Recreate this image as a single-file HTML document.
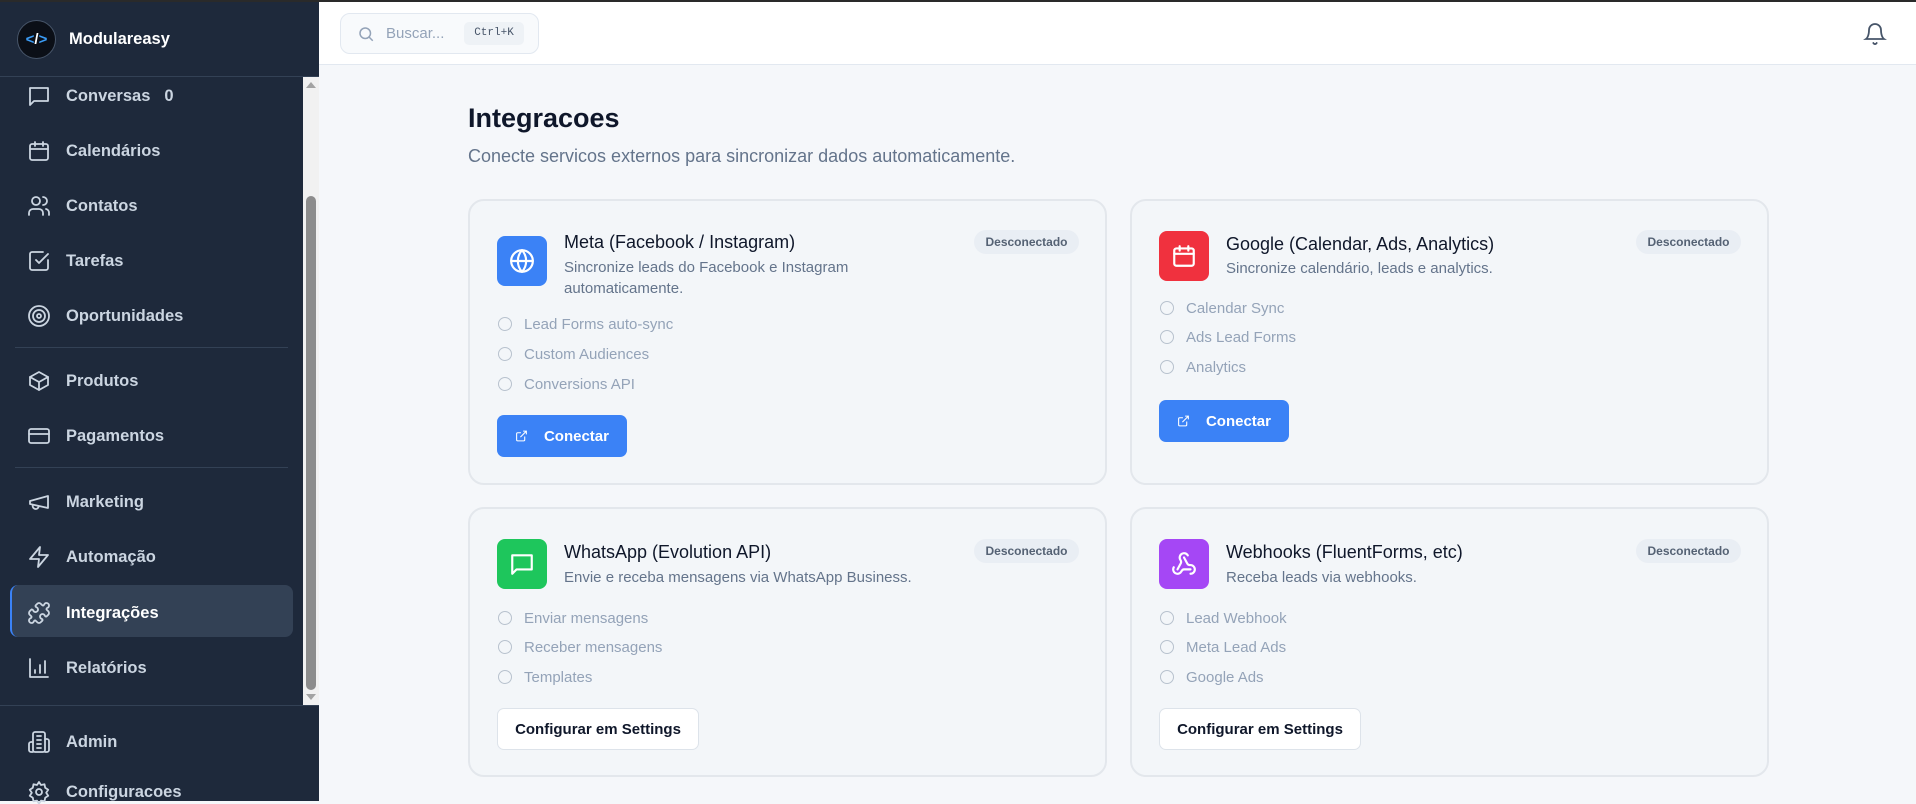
<!DOCTYPE html>
<html><head><meta charset="utf-8"><style>
*{margin:0;padding:0;box-sizing:border-box}
body{width:1916px;height:801px;overflow:hidden;background:#f5f7fa;font-family:"Liberation Sans",sans-serif;position:relative}
.sb{position:absolute;left:0;top:0;width:319px;height:801px;background:#1e293b}
.topline{position:absolute;left:0;top:0;width:1916px;height:2px;background:#2a2a2a;z-index:5}
.nav{position:absolute;left:27px;display:flex;align-items:center;color:#cbd5e1;font-size:16.5px;font-weight:bold}
.nav svg{width:24px;height:24px;stroke:#cbd5e1;fill:none;stroke-width:1.8;stroke-linecap:round;stroke-linejoin:round;margin-right:15px}
.div{position:absolute;left:15px;width:273px;height:1px;background:#334155}
.hdr{position:absolute;left:319px;top:2px;width:1597px;height:63px;background:#fff;border-bottom:1px solid #e2e8f0}
.card{position:absolute;width:639px;background:#f3f6f9;border:2px solid #e3e7ec;border-radius:16px}
.ic{position:absolute;left:27px;width:50px;height:50px;border-radius:8px;display:flex;align-items:center;justify-content:center}
.ic svg{width:26px;height:26px;fill:none;stroke:#fff;stroke-width:2;stroke-linecap:round;stroke-linejoin:round}
.tt{position:absolute;left:94px;font-size:18px;color:#0f172a;line-height:22px}
.ds{position:absolute;left:94px;font-size:15px;color:#64748b;line-height:21px}
.bd{position:absolute;right:26px;width:105px;height:24px;border-radius:12px;background:#e9eef4;color:#556274;font-size:12px;font-weight:bold;text-align:center;line-height:24px}
.ft{position:absolute;left:28px;font-size:15px;color:#94a3b8;display:flex;align-items:center;height:20px}
.ft i{width:14px;height:14px;border:1.5px solid #b8c2ce;border-radius:50%;margin-right:12px}
.btn{position:absolute;left:27px;height:42px;border-radius:7px;font-size:15px;font-weight:bold;display:flex;align-items:center;padding:0 18px;white-space:nowrap}
.blue{background:#3b82f6;color:#fff;width:130px}
.white{background:#fff;border:1px solid #dde3ea;color:#0f172a;width:202px;justify-content:center;padding:0}
</style></head><body>
<div class="topline"></div>
<div class="sb">
  <div style="position:absolute;left:17px;top:20px;width:39px;height:39px;border-radius:50%;background:#0b0f17;border:1px solid #475569;color:#3b9cf6;font-size:15px;font-weight:bold;text-align:center;line-height:37px">&lt;<span style="color:#fff">/</span>&gt;</div>
  <div style="position:absolute;left:69px;top:30px;color:#fff;font-size:16.5px;font-weight:bold">Modulareasy</div>
  <div style="position:absolute;left:0;top:76px;width:319px;height:1px;background:#334155"></div>
  <div style="position:absolute;left:303px;top:77px;width:16px;height:628px;background:#f1f1f1"></div>
  <div style="position:absolute;left:306px;top:196px;width:10px;height:494px;background:#8c8c8c;border-radius:5px"></div>
  <div style="position:absolute;left:306px;top:82px;width:0;height:0;border-left:5px solid transparent;border-right:5px solid transparent;border-bottom:6px solid #a3a3a3"></div>
  <div style="position:absolute;left:306px;top:694px;width:0;height:0;border-left:5px solid transparent;border-right:5px solid transparent;border-top:6px solid #a3a3a3"></div>
  <div class="nav" style="top:84px"><svg viewBox="0 0 24 24"><path d="M3 4h18v13H7l-4 4z"/></svg>Conversas<span style="margin-left:14px">0</span></div>
  <div class="nav" style="top:139px"><svg viewBox="0 0 24 24"><rect x="3" y="5" width="18" height="16" rx="2"/><path d="M8 3v4M16 3v4M3 10h18"/></svg>Calendários</div>
  <div class="nav" style="top:194px"><svg viewBox="0 0 24 24"><circle cx="9" cy="7" r="4"/><path d="M2 21v-2a4 4 0 014-4h6a4 4 0 014 4v2M16 3a4 4 0 010 8M22 21v-2a4 4 0 00-3-4"/></svg>Contatos</div>
  <div class="nav" style="top:249px"><svg viewBox="0 0 24 24"><path d="M21 11v8a2 2 0 01-2 2H5a2 2 0 01-2-2V5a2 2 0 012-2h11"/><path d="M9 11l3 3 9-9"/></svg>Tarefas</div>
  <div class="nav" style="top:304px"><svg viewBox="0 0 24 24"><circle cx="12" cy="12" r="10"/><circle cx="12" cy="12" r="6"/><circle cx="12" cy="12" r="2"/></svg>Oportunidades</div>
  <div class="div" style="top:347px"></div>
  <div class="nav" style="top:369px"><svg viewBox="0 0 24 24"><path d="M21 8l-9-5-9 5v8l9 5 9-5z"/><path d="M3 8l9 5 9-5M12 13v8"/></svg>Produtos</div>
  <div class="nav" style="top:424px"><svg viewBox="0 0 24 24"><rect x="2" y="5" width="20" height="14" rx="2"/><path d="M2 10h20"/></svg>Pagamentos</div>
  <div class="div" style="top:467px"></div>
  <div class="nav" style="top:490px"><svg viewBox="0 0 24 24"><path d="M3 11l18-5v12L3 14z"/><path d="M11.6 16.8a3 3 0 11-5.8-1.6"/></svg>Marketing</div>
  <div class="nav" style="top:545px"><svg viewBox="0 0 24 24"><path d="M13 2L3 14h9l-1 8 10-12h-9z"/></svg>Automação</div>
  <div style="position:absolute;left:10px;top:585px;width:283px;height:52px;background:#334155;border-radius:8px;border-left:2px solid #3b82f6"></div>
  <div class="nav" style="top:601px;color:#fff"><svg viewBox="0 0 24 24"><path d="M19.439 7.85c-.049.322.059.648.289.878l1.568 1.568c.47.47.706 1.087.706 1.704s-.235 1.233-.706 1.704l-1.611 1.611a.98.98 0 0 1-.837.276c-.47-.07-.802-.48-.968-.925a2.501 2.501 0 1 0-3.214 3.214c.446.166.855.497.925.968a.979.979 0 0 1-.276.837l-1.61 1.61a2.404 2.404 0 0 1-1.705.707 2.402 2.402 0 0 1-1.704-.706l-1.568-1.568a1.026 1.026 0 0 0-.877-.29c-.493.074-.84.504-1.02.968a2.5 2.5 0 1 1-3.237-3.237c.464-.18.894-.527.967-1.02a1.026 1.026 0 0 0-.289-.877l-1.568-1.568A2.402 2.402 0 0 1 1.998 12c0-.617.236-1.234.706-1.704L4.23 8.77c.24-.24.581-.353.917-.303.515.077.877.528 1.073 1.01a2.5 2.5 0 1 0 3.259-3.259c-.482-.196-.933-.558-1.01-1.073-.05-.336.062-.676.303-.917l1.525-1.525A2.402 2.402 0 0 1 12 1.998c.617 0 1.234.236 1.704.706l1.568 1.568c.23.23.556.338.877.29.493-.074.84-.504 1.02-.968a2.5 2.5 0 1 1 3.237 3.237c-.464.18-.894.527-.967 1.02Z"/></svg>Integrações</div>
  <div class="nav" style="top:656px"><svg viewBox="0 0 24 24"><path d="M3 3v18h18M8 17v-3M13 17V9M18 17V5"/></svg>Relatórios</div>
  <div style="position:absolute;left:0;top:705px;width:319px;height:1px;background:#334155"></div>
  <div class="nav" style="top:730px"><svg viewBox="0 0 24 24"><rect x="6" y="2" width="12" height="20" rx="2"/><path d="M6 12H4a2 2 0 00-2 2v6a2 2 0 002 2h2M18 9h2a2 2 0 012 2v9a2 2 0 01-2 2h-2M10 6h4M10 10h4M10 14h4M10 18h4"/></svg>Admin</div>
  <div class="nav" style="top:780px"><svg viewBox="0 0 24 24"><circle cx="12" cy="12" r="3"/><path d="M12 2l2 3 3.5-.7.7 3.5 3 2-2 3 2 3-3 2-.7 3.5-3.5-.7-2 3-2-3-3.5.7-.7-3.5-3-2 2-3-2-3 3-2 .7-3.5 3.5.7z"/></svg>Configuracoes</div>
</div>
<div class="hdr">
  <div style="position:absolute;left:21px;top:11px;width:199px;height:41px;border:1px solid #e2e8f0;border-radius:10px;background:#f8fafc">
    <svg style="position:absolute;left:16px;top:11px" width="18" height="18" viewBox="0 0 24 24" fill="none" stroke="#94a3b8" stroke-width="2"><circle cx="11" cy="11" r="7"/><path d="M21 21l-5-5"/></svg>
    <span style="position:absolute;left:45px;top:11px;font-size:15px;color:#94a3b8">Buscar...</span>
    <span style="position:absolute;left:123px;top:8px;width:60px;height:23px;background:#eef2f6;border-radius:5px;font-family:'Liberation Mono',monospace;font-size:11px;color:#475569;text-align:center;line-height:23px">Ctrl+K</span>
  </div>
  <svg style="position:absolute;left:1544px;top:20px" width="24" height="24" viewBox="0 0 24 24" fill="none" stroke="#475569" stroke-width="1.8" stroke-linecap="round"><path d="M6 8a6 6 0 0112 0c0 7 3 9 3 9H3s3-2 3-9M10.3 21a1.9 1.9 0 003.4 0"/></svg>
</div>
<div style="position:absolute;left:468px;top:103px;font-size:27px;font-weight:bold;color:#0f172a">Integracoes</div>
<div style="position:absolute;left:468px;top:146px;font-size:18px;color:#64748b">Conecte servicos externos para sincronizar dados automaticamente.</div>

<div class="card" style="left:468px;top:199px;height:286px">
  <div class="ic" style="top:35px;background:#3b82f6"><svg viewBox="0 0 24 24"><circle cx="12" cy="12" r="10"/><path d="M2 12h20M12 2a15 15 0 010 20M12 2a15 15 0 000 20"/></svg></div>
  <div class="tt" style="top:30px">Meta (Facebook / Instagram)</div>
  <div class="ds" style="top:56px">Sincronize leads do Facebook e Instagram<br>automaticamente.</div>
  <div class="bd" style="top:29px">Desconectado</div>
  <div class="ft" style="top:113px"><i></i>Lead Forms auto-sync</div>
  <div class="ft" style="top:143px"><i></i>Custom Audiences</div>
  <div class="ft" style="top:173px"><i></i>Conversions API</div>
  <div class="btn blue" style="top:214px"><svg width="16" height="16" viewBox="0 0 24 24" fill="none" stroke="#fff" stroke-width="2" style="margin-right:16px"><path d="M15 3h6v6M10 14L21 3M18 13v6a2 2 0 01-2 2H5a2 2 0 01-2-2V8a2 2 0 012-2h6"/></svg>Conectar</div>
</div>
<div class="card" style="left:1130px;top:199px;height:286px">
  <div class="ic" style="top:30px;background:#f0313e"><svg viewBox="0 0 24 24"><rect x="3" y="5" width="18" height="16" rx="2"/><path d="M8 3v4M16 3v4M3 10h18"/></svg></div>
  <div class="tt" style="top:32px">Google (Calendar, Ads, Analytics)</div>
  <div class="ds" style="top:57px">Sincronize calendário, leads e analytics.</div>
  <div class="bd" style="top:29px">Desconectado</div>
  <div class="ft" style="top:97px"><i></i>Calendar Sync</div>
  <div class="ft" style="top:126px"><i></i>Ads Lead Forms</div>
  <div class="ft" style="top:156px"><i></i>Analytics</div>
  <div class="btn blue" style="top:199px"><svg width="16" height="16" viewBox="0 0 24 24" fill="none" stroke="#fff" stroke-width="2" style="margin-right:16px"><path d="M15 3h6v6M10 14L21 3M18 13v6a2 2 0 01-2 2H5a2 2 0 01-2-2V8a2 2 0 012-2h6"/></svg>Conectar</div>
</div>
<div class="card" style="left:468px;top:507px;height:270px">
  <div class="ic" style="top:30px;background:#1ec65c"><svg viewBox="0 0 24 24"><path d="M3 4h18v13H7l-4 4z"/></svg></div>
  <div class="tt" style="top:32px">WhatsApp (Evolution API)</div>
  <div class="ds" style="top:58px">Envie e receba mensagens via WhatsApp Business.</div>
  <div class="bd" style="top:30px">Desconectado</div>
  <div class="ft" style="top:99px"><i></i>Enviar mensagens</div>
  <div class="ft" style="top:128px"><i></i>Receber mensagens</div>
  <div class="ft" style="top:158px"><i></i>Templates</div>
  <div class="btn white" style="top:199px">Configurar em Settings</div>
</div>
<div class="card" style="left:1130px;top:507px;height:270px">
  <div class="ic" style="top:30px;background:#a547f5"><svg viewBox="0 0 24 24"><path d="M18 16.98h-5.99c-1.1 0-1.95.94-2.48 1.9A4 4 0 012 17c.01-.7.2-1.4.57-2"/><path d="M6 17l3.13-5.78c.53-.97.1-2.18-.5-3.1a4 4 0 116.89-4.06"/><path d="M12 6l3.13 5.73C15.66 12.7 16.9 13 18 13a4 4 0 010 8"/></svg></div>
  <div class="tt" style="top:32px">Webhooks (FluentForms, etc)</div>
  <div class="ds" style="top:58px">Receba leads via webhooks.</div>
  <div class="bd" style="top:30px">Desconectado</div>
  <div class="ft" style="top:99px"><i></i>Lead Webhook</div>
  <div class="ft" style="top:128px"><i></i>Meta Lead Ads</div>
  <div class="ft" style="top:158px"><i></i>Google Ads</div>
  <div class="btn white" style="top:199px">Configurar em Settings</div>
</div>
</body></html>
